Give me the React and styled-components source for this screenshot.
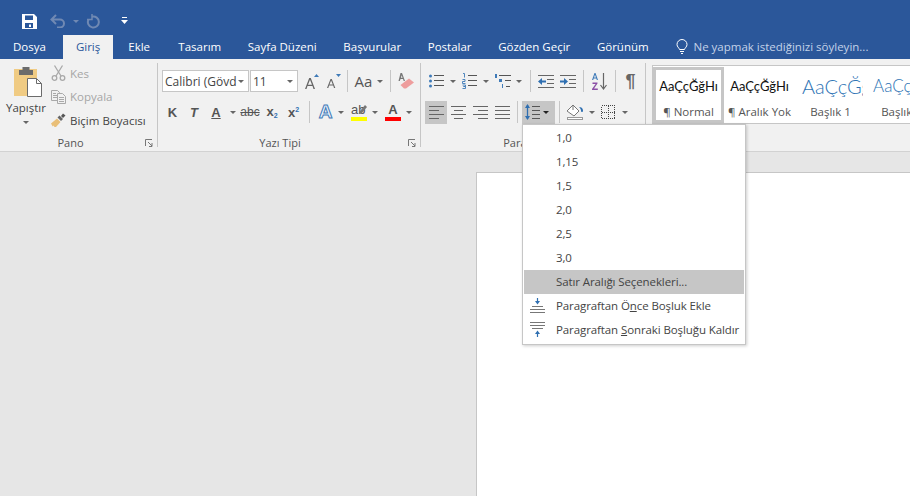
import React from 'react';
import styled, { createGlobalStyle } from 'styled-components';

const GlobalStyle = createGlobalStyle`
  html, body { margin: 0; height: 100%; overflow: hidden; }
  body { font-family: "Open Sans", "Noto Sans", sans-serif; font-size: 11.5px; color: #444; }
  #root { height: 100%; }
`;

const Window = styled.div`
  position: relative;
  display: flex;
  flex-direction: column;
  height: 496px;
  overflow: hidden;
  background: #e6e6e6;
`;

const TitleBar = styled.div`
  height: 35px;
  background: #2b579a;
  display: flex;
  align-items: center;
  padding: 7px 0 0 22px;
  box-sizing: border-box;
`;

const Qat = styled.div`
  display: flex;
  align-items: center;
  width: ${p => p.$w}px;
`;

const TabBar = styled.div`
  height: 24px;
  background: #2b579a;
  display: flex;
  align-items: stretch;
  color: #fff;
  font-size: 11.5px;
`;

const Tab = styled.div`
  padding: 0 ${p => p.$pad ?? 13.3}px 1px;
  display: flex;
  align-items: center;
  background: ${p => (p.$active ? '#f1f1f1' : 'transparent')};
  color: ${p => (p.$active ? '#2b579a' : '#fff')};
  margin-right: ${p => p.$mr ?? 0}px;
  white-space: nowrap;
`;

const TellMe = styled.div`
  display: flex;
  align-items: center;
  gap: 5px;
  margin-left: 14.5px;
  padding-bottom: 1px;
  color: #c3d2e8;
  white-space: nowrap;
`;

const Ribbon = styled.div`
  height: 88px;
  background: #f1f1f1;
  border-bottom: 1px solid #d2d2d2;
  display: flex;
  padding-top: 4px;
`;

const Group = styled.div`
  width: ${p => p.$w}px;
  height: 84px;
  flex: none;
  display: flex;
  flex-direction: column;
  border-right: ${p => (p.$plain ? 'none' : '1px solid #c6c6c6')};
`;

const GroupBody = styled.div`
  flex: 1;
  min-height: 0;
  display: flex;
  flex-direction: column;
  padding: 7px 0 0 4px;
  gap: 8px;
`;

const GroupFooter = styled.div`
  height: 8px;
  flex: none;
  display: flex;
  align-items: center;
  color: #555;
  font-size: 11px;
  padding-right: 4px;
`;

const GroupLabel = styled.div`
  flex: 1;
  text-align: center;
  margin-top: -2px;
  padding-right: ${p => p.$shift ?? 0}px;
`;

const PanoBody = styled.div`
  flex: 1;
  min-height: 0;
  display: flex;
  padding-left: 5px;
`;

const PasteButton = styled.div`
  width: 42px;
  display: flex;
  flex-direction: column;
  align-items: center;
  padding-top: 4px;
  color: #444;
`;

const ClipboardBox = styled.div`
  margin-left: 4px;
  height: 30px;
`;

const PasteLabel = styled.div`
  margin-top: 4px;
  line-height: 14px;
  white-space: nowrap;
`;

const PasteCaret = styled.div`
  height: 15px;
  display: flex;
  align-items: center;
`;

const SmallColumn = styled.div`
  display: flex;
  flex-direction: column;
  margin-left: 4px;
  gap: 3.5px;
`;

const SmallButton = styled.div`
  height: 20px;
  display: flex;
  align-items: center;
  gap: 4px;
  white-space: nowrap;
  color: ${p => (p.$off ? '#a6a6a6' : '#444')};
`;

const Row = styled.div`
  display: flex;
  align-items: center;
  height: ${p => p.$h ?? 22}px;
`;

const Field = styled.div`
  width: ${p => p.$w}px;
  height: 22px;
  box-sizing: border-box;
  background: #fff;
  border: 1px solid #c6c6c6;
  margin-right: 1px;
  display: flex;
  align-items: center;
  justify-content: space-between;
  padding: 0 4px 0 2px;
  font-size: 12px;
  color: #444;
  white-space: nowrap;
  overflow: hidden;
  flex: none;
`;

const FieldText = styled.span`
  overflow: hidden;
`;

const Tool = styled.div`
  width: ${p => p.$w ?? 22}px;
  height: ${p => p.$h ?? 22}px;
  flex: none;
  display: flex;
  align-items: center;
  justify-content: center;
  margin-left: ${p => p.$ml ?? 0}px;
  background: ${p => (p.$on ? '#c6c6c6' : 'transparent')};
  color: #555;
  font-size: ${p => p.$fs ?? 12}px;
`;

const Pilcrow = styled.span`
  font-family: "Liberation Sans", sans-serif;
  font-size: 18px;
  font-weight: 700;
  color: #666;
`;

const Caret = styled.i`
  display: block;
  flex: none;
  width: 0;
  height: 0;
  border-left: 3px solid transparent;
  border-right: 3px solid transparent;
  border-top: 3px solid ${p => p.$c ?? '#666'};
`;

const CaretBox = styled.div`
  width: ${p => p.$w ?? 12}px;
  flex: none;
  display: flex;
  justify-content: center;
  align-items: center;
`;

const VSep = styled.div`
  width: 1px;
  height: ${p => p.$h ?? 22}px;
  flex: none;
  background: #c6c6c6;
  margin: 0 ${p => p.$r ?? 4}px 0 ${p => p.$l ?? 4}px;
`;

const Gallery = styled.div`
  margin: 2px 0 0 6px;
  width: 260px;
  height: 59px;
  box-sizing: border-box;
  background: #fff;
  border: 1px solid #c6c6c6;
  border-right: none;
  display: flex;
  padding-top: 1px;
`;

const StyleCard = styled.div`
  width: 71px;
  height: 56px;
  flex: none;
  box-sizing: border-box;
  border: 3px solid ${p => (p.$selected ? '#c6c6c6' : 'transparent')};
  display: flex;
  flex-direction: column;
  align-items: center;
  overflow: hidden;
`;

const Sample = styled.div`
  height: 34px;
  width: 100%;
  padding: 0 2px 3px ${p => (p.$head ? 4 : 2)}px;
  box-sizing: border-box;
  display: flex;
  align-items: center;
  justify-content: ${p => (p.$head ? 'flex-start' : 'center')};
  overflow: hidden;
  white-space: nowrap;
  font-family: Lato, "Liberation Sans", sans-serif;
  font-size: ${p => p.$size ?? 13}px;
  font-weight: ${p => (p.$head ? 300 : 400)};
  color: ${p => (p.$head ? '#2e74b5' : '#111')};
`;

const StyleName = styled.div`
  font-size: 11.5px;
  line-height: 16px;
  color: #555;
  white-space: nowrap;
`;

const DocArea = styled.div`
  flex: 1;
  padding: 20px 0 0 476px;
  display: flex;
  min-height: 0;
`;

const Page = styled.div`
  flex: 1;
  background: #fff;
  border: 1px solid #c6c6c6;
  border-bottom: none;
  border-right: none;
`;

const Menu = styled.div`
  position: absolute;
  left: 522px;
  top: 124px;
  width: 224px;
  height: 221px;
  box-sizing: border-box;
  background: #fff;
  border: 1px solid #c6c6c6;
  box-shadow: 1px 1px 3px rgba(0, 0, 0, 0.2);
  padding: 1px;
`;

const MenuItem = styled.div`
  height: 24px;
  box-sizing: border-box;
  padding-bottom: 1px;
  display: flex;
  align-items: center;
  background: ${p => (p.$hot ? '#c6c6c6' : 'transparent')};
  color: #444;
  letter-spacing: -0.1px;
  white-space: nowrap;
`;

const MenuIcon = styled.div`
  width: 32px;
  flex: none;
  display: flex;
  justify-content: center;
  padding-right: 5px;
  box-sizing: border-box;
`;

const Key = styled.span`
  text-decoration: underline;
`;

const Letter = styled.span`
  font-family: "Liberation Sans", sans-serif;
  font-weight: ${p => p.$weight ?? 700};
  font-style: ${p => (p.$italic ? 'italic' : 'normal')};
  font-size: ${p => p.$size ?? 13}px;
  color: #555;
  line-height: 1;
  text-decoration: ${p => p.$line ?? 'none'};
`;

const Sub = styled.sub`
  font-size: 7px;
  color: #2f6fb1;
  vertical-align: -2px;
`;

const Sup = styled.sup`
  font-size: 7px;
  color: #2f6fb1;
  vertical-align: 5px;
`;

const ColorMark = styled.div`
  position: relative;
  display: flex;
  flex-direction: column;
  align-items: center;
  width: 16px;
  font-family: "Liberation Sans", sans-serif;
  font-size: 13px;
  font-weight: ${p => p.$weight ?? 700};
  line-height: 12px;
  color: #555;
`;

const MarkText = styled.span`
  align-self: ${p => (p.$left ? 'flex-start' : 'center')};
`;

const ColorBar = styled.div`
  width: 100%;
  height: 4px;
  background: ${p => p.$c};
  margin-top: 1px;
`;

const PenOverlay = styled.div`
  position: absolute;
  right: -1px;
  top: -1px;
  height: 12px;
`;

const OutlineA = styled.span`
  font-family: "Liberation Sans", sans-serif;
  font-size: 19px;
  font-weight: 700;
  color: #eaf2fa;
  -webkit-text-stroke: 1px #3e7ab8;
`;

const Launcher = () => (
  <svg width="8" height="8" viewBox="0 0 8 8" fill="none" stroke="#777">
    <path d="M.5 7V.5H7" />
    <path d="M3 3l4 4M7 4v3.500H4" />
  </svg>
);

const AlignIcon = ({ kind }) => {
  const rows = {
    left: [[0, 15], [0, 10], [0, 15], [0, 10]],
    center: [[0, 15], [3, 12], [0, 15], [3, 12]],
    right: [[0, 15], [5, 15], [0, 15], [5, 15]],
    justify: [[0, 15], [0, 15], [0, 15], [0, 15]],
  }[kind];
  return (
    <svg width="15" height="13" viewBox="0 0 15 13" stroke="#666">
      {rows.map(([a, b], i) => <path key={i} d={`M${a} ${i * 4 + .5}H${b}`} />)}
    </svg>
  );
};

const Icons = {
  save: (
    <svg width="15" height="15" viewBox="0 0 15 15">
      <path fillRule="evenodd" fill="#fff" d="M0 0h12l3 3v12H0zM3 1.500v4.500h8V1.500zM3 9v5h8V9zM7 10.500h2V13H7z" />
    </svg>
  ),
  undo: (
    <svg width="16" height="14" viewBox="0 0 16 14" fill="none" stroke="#7089b3" strokeWidth="2">
      <path d="M1.500 5.500H10a4 4 0 0 1 0 8H7M6 1 1.500 5.500 6 10" />
    </svg>
  ),
  redo: (
    <svg width="14" height="15" viewBox="0 0 14 15" fill="none" stroke="#7089b3" strokeWidth="2">
      <path d="M6 2.700A5.500 5.500 0 1 1 2.500 5.500" />
      <path d="M6 0v5.500H1" strokeWidth="1.500" />
    </svg>
  ),
  custom: (
    <svg width="7" height="8" viewBox="0 0 7 8">
      <path d="M1 0h5v1H1zM0 3h7L3.500 7z" fill="#fff" />
    </svg>
  ),
  bulb: (
    <svg width="12" height="16" viewBox="0 0 12 16" fill="none" stroke="#fff">
      <path d="M3.500 10.500C3 8.500 1 8 1 5.500a5 5 0 0 1 10 0c0 2.500-2 3-2.500 5zM4 12.500h4M5 14.500h2" />
    </svg>
  ),
  clipboard: (
    <svg width="28" height="30" viewBox="0 0 28 30">
      <rect x="0" y="2" width="23" height="27" fill="#f0cb83" />
      <path d="M5 8V3h3.500V0h7v3H19v5z" fill="#6b6b6b" />
      <path d="M13.500 11.500h9l5 5v13h-14z" fill="#fff" stroke="#6b6b6b" />
      <path d="M22.500 11.500v5h5" fill="none" stroke="#6b6b6b" />
    </svg>
  ),
  scissors: (
    <svg width="15" height="16" viewBox="0 0 15 16" fill="none" stroke="#a9a9a9" strokeWidth="1.300">
      <circle cx="3.500" cy="13" r="2.300" />
      <circle cx="11.500" cy="13" r="2.300" />
      <path d="M5 11 11.500.5M10 11 3.500.5" />
    </svg>
  ),
  copy: (
    <svg width="15" height="14" viewBox="0 0 15 14" fill="none" stroke="#a9a9a9">
      <path d="M.5.500h6l2 2v8h-8z" fill="#f1f1f1" />
      <path d="M6.500 3.500h5l3 3v7h-8z" fill="#f1f1f1" />
      <path d="M2 3.500h3M2 5.500h4M2 7.500h4M8 7.500h5M8 9.500h5M8 11.500h5" />
    </svg>
  ),
  brush: (
    <svg width="15" height="14" viewBox="0 0 15 14">
      <path d="M0 10.500 6 5.500l3.500 3.500-4.500 5H3.500l-1-1.500-.8 1z" fill="#e9bf78" />
      <path d="M6.500 4.500 10 8l2-2-3.500-3.500z" fill="#666" />
      <path d="M10 3l2-2.500 2.500 2L12 5z" fill="#555" />
    </svg>
  ),
  grow: (
    <svg width="15" height="15" viewBox="0 0 15 15">
      <path d="M0 15 4.200 4h1.600L10 15H8.500l-1-3H2.500l-1 3zM3 10.800h4L5 5.800z" fill="#666" fillRule="evenodd" />
      <path d="M9 3 11.500 0 14 3z" fill="#3e7ab8" />
    </svg>
  ),
  shrink: (
    <svg width="14" height="14" viewBox="0 0 14 14">
      <path d="M0 14 3.500 5h1.300l3.500 9H7l-.8-2.400H2.100L1.300 14zM2.500 10.500h3.300L4.100 6.400z" fill="#666" fillRule="evenodd" />
      <path d="M9 0h5l-2.500 3z" fill="#3e7ab8" />
    </svg>
  ),
  eraser: (
    <svg width="16" height="16" viewBox="0 0 16 16">
      <path d="M2.500 12 11 5.500 16 9.500 8 15.500H6z" fill="#ee9d9d" />
      <path d="M2.500 0h1.500l3 8H5.700L5 6H2.500L1.800 8H.5zM2.900 4.800h1.700L3.700 2.200z" fill="#777" fillRule="evenodd" />
    </svg>
  ),
  pen: (
    <svg width="10" height="12" viewBox="0 0 10 12">
      <path d="M1 11l1-3 5-6 2 2-5 6z" fill="#777" />
    </svg>
  ),
  bullets: (
    <svg width="15" height="15" viewBox="0 0 15 15">
      {[2, 7, 12].map(y => <circle key={y} cx="1.500" cy={y} r="1.500" fill="#3e7ab8" />)}
      <path d="M5 1.500H15M5 6.500H15M5 11.500H15" stroke="#555" />
    </svg>
  ),
  numbers: (
    <svg width="15" height="16" viewBox="0 0 15 16">
      <path d="M1 .5h1.500v4M.5 6.500h2.500v2H.5v2h3M.5 12h3v1.500h-2 2V15.500h-3" fill="none" stroke="#3e7ab8" strokeWidth=".9" />
      <path d="M6 2.500H15M6 7.500H15M6 12.500H15" stroke="#555" />
    </svg>
  ),
  multi: (
    <svg width="17" height="15" viewBox="0 0 17 15">
      <path d="M1 0h2v4H1zM5 5h3v3H5zM8 10h1v4H8z" fill="#3e7ab8" />
      <path d="M5 1.500H17M11 6.500H17M12 12.500H16" stroke="#555" />
    </svg>
  ),
  outdent: (
    <svg width="16" height="13" viewBox="0 0 16 13">
      <path d="M0 .5H16M9 4.500H16M9 8.500H16M0 12.500H16" stroke="#666" />
      <path d="M0 6.500 4 3v2.500h4v2H4V10z" fill="#2f6fb1" />
    </svg>
  ),
  indent: (
    <svg width="16" height="13" viewBox="0 0 16 13">
      <path d="M0 .5H16M9 4.500H16M9 8.500H16M0 12.500H16" stroke="#666" />
      <path d="M8 6.500 4 3v2.500H0v2h4V10z" fill="#2f6fb1" />
    </svg>
  ),
  sort: (
    <svg width="15" height="17" viewBox="0 0 15 17">
      <path d="M0 7 2.500 0h1L6 7H4.800l-.5-1.500H1.700L1.200 7zM2 4.500h2L3 1.800z" fill="#3e7ab8" fillRule="evenodd" />
      <path d="M.5 9.500h5v1L2 15.500h3.800V17H0v-1L3.600 11H.5z" fill="#8b4fa6" />
      <path d="M11.500 0v15M8.500 12l3 4 3-4" fill="none" stroke="#666" strokeWidth="1.200" />
    </svg>
  ),
  lineSpacing: (
    <svg width="15" height="16" viewBox="0 0 15 16">
      <path d="M2.500 1v14" stroke="#2f6fb1" strokeWidth="1.300" />
      <path d="M0 4 2.500 0 5 4zM0 12h5l-2.500 4z" fill="#2f6fb1" />
      <path d="M7 2.500h8M7 6.500h8M7 10.500h8M7 14.500h8" stroke="#555" />
    </svg>
  ),
  shading: (
    <svg width="17" height="16" viewBox="0 0 17 16">
      <path d="M0 7 6 1l6 6-5 5z" fill="#fff" stroke="#777" />
      <path d="M6 1V6" stroke="#777" />
      <path d="M12 3c2 0 4 1 4 3.500 0 1-.5 1.500-1 1.500s-1-.5-1-1.500C14 5.500 13 4 12 3z" fill="#2f6fb1" />
      <rect x=".5" y="13.500" width="15" height="2" fill="#fff" stroke="#999" />
    </svg>
  ),
  borders: (
    <svg width="14" height="14" viewBox="0 0 14 14" fill="none" stroke="#444" strokeDasharray="1 1" shapeRendering="crispEdges">
      <path d="M.5.500h13v13H.5zM.5 7h13M7 .500v13" />
    </svg>
  ),
  before: (
    <svg width="15" height="15" viewBox="0 0 15 15">
      <path d="M7.500 0v4" stroke="#2f6fb1" strokeWidth="1.200" />
      <path d="M5 3h5L7.500 6.500z" fill="#2f6fb1" />
      <path d="M2 8.500H13M0 11.500H15M0 14.500H15" stroke="#777" />
    </svg>
  ),
  after: (
    <svg width="15" height="15" viewBox="0 0 15 15">
      <path d="M0 .5H15M0 3.500H15M2 6.500H13" stroke="#777" />
      <path d="M7.500 11v4" stroke="#2f6fb1" strokeWidth="1.200" />
      <path d="M5 12h5L7.500 8.500z" fill="#2f6fb1" />
    </svg>
  ),
};

const tabs = [
  ['Dosya', 13, 4],
  ['Giriş', 13, 0, true],
  ['Ekle', 15],
  ['Tasarım'],
  ['Sayfa Düzeni'],
  ['Başvurular'],
  ['Postalar'],
  ['Gözden Geçir'],
  ['Görünüm'],
];

const spacings = ['1,0', '1,15', '1,5', '2,0', '2,5', '3,0'];

export default function App() {
  return (
    <Window>
      <GlobalStyle />
      <TitleBar>
        <Qat $w={28}>{Icons.save}</Qat>
        <Qat $w={23}>{Icons.undo}</Qat>
        <Qat $w={13}><Caret $c="#7089b3" /></Qat>
        <Qat $w={35}>{Icons.redo}</Qat>
        <Qat $w={10}>{Icons.custom}</Qat>
      </TitleBar>

      <TabBar>
        {tabs.map(([name, pad, mr, active]) => (
          <Tab key={name} $pad={pad} $mr={mr} $active={active}>{name}</Tab>
        ))}
        <TellMe>{Icons.bulb}<span>Ne yapmak istediğinizi söyleyin...</span></TellMe>
      </TabBar>

      <Ribbon>
        <Group $w={157}>
          <PanoBody>
            <PasteButton>
              <ClipboardBox>{Icons.clipboard}</ClipboardBox>
              <PasteLabel>Yapıştır</PasteLabel>
              <PasteCaret><Caret /></PasteCaret>
            </PasteButton>
            <SmallColumn>
              <SmallButton $off>{Icons.scissors}<span>Kes</span></SmallButton>
              <SmallButton $off>{Icons.copy}<span>Kopyala</span></SmallButton>
              <SmallButton>{Icons.brush}<span>Biçim Boyacısı</span></SmallButton>
            </SmallColumn>
          </PanoBody>
          <GroupFooter>
            <GroupLabel $shift={4}>Pano</GroupLabel>
            <Launcher />
          </GroupFooter>
        </Group>

        <Group $w={262}>
          <GroupBody>
            <Row>
              <Field $w={87}><FieldText>Calibri (Gövd</FieldText><Caret /></Field>
              <Field $w={48}><FieldText>11</FieldText><Caret /></Field>
              <Tool $w={20} $ml={3}>{Icons.grow}</Tool>
              <Tool $w={20} $ml={2}>{Icons.shrink}</Tool>
              <VSep $l={3} $r={4} />
              <Tool $w={23} $fs={15}>Aa</Tool>
              <CaretBox $w={9}><Caret /></CaretBox>
              <VSep $l={6} $r={4} />
              <Tool $w={22}>{Icons.eraser}</Tool>
            </Row>
            <Row $h={24}>
              <Tool $w={21}><Letter>K</Letter></Tool>
              <Tool $w={22}><Letter $italic>T</Letter></Tool>
              <Tool $w={22}><Letter $line="underline">A</Letter></Tool>
              <CaretBox><Caret /></CaretBox>
              <Tool $w={22}><Letter $weight={400} $size={12} $line="line-through">abc</Letter></Tool>
              <Tool $w={22}><Letter>x<Sub>2</Sub></Letter></Tool>
              <Tool $w={21}><Letter>x<Sup>2</Sup></Letter></Tool>
              <VSep $l={5} $r={5} />
              <Tool $w={21}><OutlineA>A</OutlineA></Tool>
              <CaretBox $w={9}><Caret /></CaretBox>
              <Tool $w={20} $ml={4}>
                <ColorMark $weight={400}>
                  <MarkText $left>ab</MarkText>
                  <PenOverlay>{Icons.pen}</PenOverlay>
                  <ColorBar $c="#ffff00" />
                </ColorMark>
              </Tool>
              <CaretBox><Caret /></CaretBox>
              <Tool $w={20} $ml={2}>
                <ColorMark><MarkText>A</MarkText><ColorBar $c="#ff0000" /></ColorMark>
              </Tool>
              <CaretBox><Caret /></CaretBox>
            </Row>
          </GroupBody>
          <GroupFooter>
            <GroupLabel $shift={6}>Yazı Tipi</GroupLabel>
            <Launcher />
          </GroupFooter>
        </Group>

        <Group $w={224}>
          <GroupBody>
            <Row>
              <Tool>{Icons.bullets}</Tool>
              <CaretBox $w={11}><Caret /></CaretBox>
              <Tool $w={23}>{Icons.numbers}</Tool>
              <CaretBox $w={10}><Caret /></CaretBox>
              <Tool>{Icons.multi}</Tool>
              <CaretBox $w={11}><Caret /></CaretBox>
              <VSep $l={6} $r={4} />
              <Tool>{Icons.outdent}</Tool>
              <Tool>{Icons.indent}</Tool>
              <VSep $l={4} $r={4} />
              <Tool $w={23}>{Icons.sort}</Tool>
              <VSep $l={4} $r={3} />
              <Tool $w={23}><Pilcrow>¶</Pilcrow></Tool>
            </Row>
            <Row $h={24}>
              <Tool $h={23} $on><AlignIcon kind="left" /></Tool>
              <Tool $h={23}><AlignIcon kind="center" /></Tool>
              <Tool $h={23}><AlignIcon kind="right" /></Tool>
              <Tool $h={23}><AlignIcon kind="justify" /></Tool>
              <VSep $l={4} $r={4} />
              <Tool $w={33} $h={23} $on>
                {Icons.lineSpacing}
                <CaretBox $w={12}><Caret $c="#222" /></CaretBox>
              </Tool>
              <VSep $l={4} $r={4} />
              <Tool $w={23}>{Icons.shading}</Tool>
              <CaretBox $w={9}><Caret /></CaretBox>
              <Tool $w={22} $ml={1}>{Icons.borders}</Tool>
              <CaretBox><Caret /></CaretBox>
            </Row>
          </GroupBody>
          <GroupFooter>
            <GroupLabel $shift={4}>Paragraf</GroupLabel>
            <Launcher />
          </GroupFooter>
        </Group>

        <Group $w={264} $plain>
          <Gallery>
            <StyleCard $selected>
              <Sample>AaÇçĞğHı</Sample>
              <StyleName>¶ Normal</StyleName>
            </StyleCard>
            <StyleCard>
              <Sample>AaÇçĞğHı</Sample>
              <StyleName>¶ Aralık Yok</StyleName>
            </StyleCard>
            <StyleCard>
              <Sample $head $size={20}>AaÇçĞğ</Sample>
              <StyleName>Başlık 1</StyleName>
            </StyleCard>
            <StyleCard>
              <Sample $head $size={17}>AaÇçĞğ</Sample>
              <StyleName>Başlık 2</StyleName>
            </StyleCard>
          </Gallery>
        </Group>
      </Ribbon>

      <DocArea>
        <Page />
      </DocArea>

      <Menu>
        {spacings.map(s => (
          <MenuItem key={s}><MenuIcon />{s}</MenuItem>
        ))}
        <MenuItem $hot><MenuIcon />Satır Aralığı Seçenekleri...</MenuItem>
        <MenuItem>
          <MenuIcon>{Icons.before}</MenuIcon>
          <span>Paragraftan Ö<Key>n</Key>ce Boşluk Ekle</span>
        </MenuItem>
        <MenuItem>
          <MenuIcon>{Icons.after}</MenuIcon>
          <span>Paragraftan <Key>S</Key>onraki Boşluğu Kaldır</span>
        </MenuItem>
      </Menu>
    </Window>
  );
}
